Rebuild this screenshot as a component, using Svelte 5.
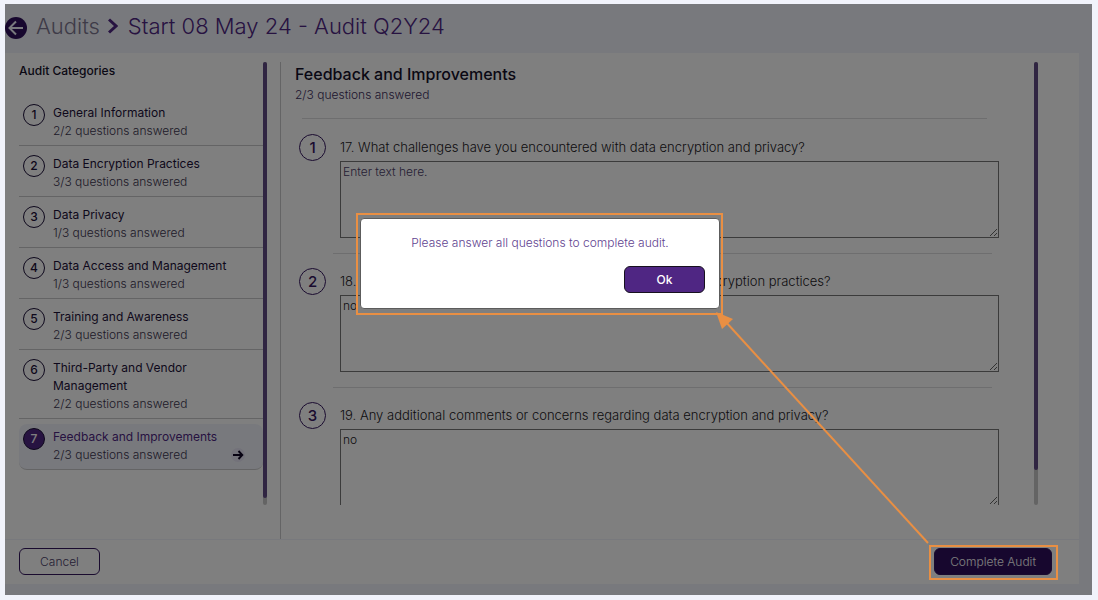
<script>
  let showDialog = $state(true);
  let active = $state(7);

  const categories = [
    { id: 1, name: 'General Information', done: '2/2' },
    { id: 2, name: 'Data Encryption Practices', done: '3/3' },
    { id: 3, name: 'Data Privacy', done: '1/3' },
    { id: 4, name: 'Data Access and Management', done: '1/3' },
    { id: 5, name: 'Training and Awareness', done: '2/3' },
    { id: 6, name: 'Third-Party and Vendor Management', done: '2/2' },
    { id: 7, name: 'Feedback and Improvements', done: '2/3' }
  ];

  let questions = $state([
    { id: 1, text: '17. What challenges have you encountered with data encryption and privacy?', answer: '' },
    { id: 2, text: '18. What improvements would you recommend for our data encryption practices?', answer: 'no' },
    { id: 3, text: '19. Any additional comments or concerns regarding data encryption and privacy?', answer: 'no' }
  ]);
</script>

<div class="app">
  <header class="header">
    <button class="back" aria-label="Back">
      <svg width="22" height="22" viewBox="0 0 22 22">
        <circle cx="11" cy="11" r="11" fill="#2e0f5c" />
        <path d="M18 11H5M11 4.5L4.5 11l6.5 6.5" fill="none" stroke="#f1f3fb" stroke-width="2" />
      </svg>
    </button>
    <a class="crumb" href="#audits">Audits</a>
    <svg class="chevron" width="10" height="16" viewBox="0 0 10 16">
      <path d="M1 1.5L8 8l-7 6.5" fill="none" stroke="#4f2683" stroke-width="3" />
    </svg>
    <h1>Start 08 May 24 - Audit Q2Y24</h1>
  </header>

  <div class="panel">
    <div class="body">
      <aside class="sidebar">
        <div class="scroll">
          <h2 class="side-title">Audit Categories</h2>
          <ul class="categories">
            {#each categories as cat (cat.id)}
              <li>
                <button class="category" class:active={active === cat.id} onclick={() => (active = cat.id)}>
                  <span class="num">{cat.id}</span>
                  <span class="info">
                    <span class="name">{cat.name}</span>
                    <span class="count">{cat.done} questions answered</span>
                  </span>
                  {#if active === cat.id}
                    <svg class="go" width="14" height="14" viewBox="0 0 14 14">
                      <circle cx="7" cy="7" r="7" fill="#e6e4f4" />
                      <path d="M2 7h9M7.5 3L11.3 7l-3.8 4" fill="none" stroke="#0e0524" stroke-width="1.9" />
                    </svg>
                  {/if}
                </button>
              </li>
            {/each}
          </ul>
        </div>
        <div class="track"><div class="thumb"></div></div>
      </aside>

      <main class="main">
        <div class="scroll">
          <h2 class="main-title">Feedback and Improvements</h2>
          <p class="main-count">2/3 questions answered</p>
          <hr />
          {#each questions as q (q.id)}
            <section class="question">
              <span class="q-num">{q.id}</span>
              <div class="q-body">
                <label for="answer-{q.id}">{q.text}</label>
                <textarea id="answer-{q.id}" placeholder="Enter text here." bind:value={q.answer}></textarea>
              </div>
            </section>
          {/each}
        </div>
        <div class="track"><div class="thumb long"></div></div>
      </main>
    </div>

    <footer class="footer">
      <button class="btn">Cancel</button>
      <button class="btn complete" onclick={() => (showDialog = true)}>Complete Audit</button>
    </footer>
  </div>

  {#if showDialog}
    <div class="overlay">
      <div class="dialog" role="alertdialog" aria-labelledby="dialog-text">
        <p id="dialog-text">Please answer all questions to complete audit.</p>
        <button class="btn ok" onclick={() => (showDialog = false)}>Ok</button>
      </div>
    </div>

    <svg class="callout" width="1087" height="591" viewBox="0 0 1087 591">
      <g fill="none" stroke="#e98f43" stroke-width="2">
        <rect x="352" y="210" width="365" height="100" />
        <rect x="925" y="542" width="127" height="33" />
        <path d="M923 539L720 317" />
      </g>
      <path d="M711 308l17 7-11 10z" fill="#e98f43" />
    </svg>
  {/if}
</div>

<style>
  :global(body) {
    background: #f1f3fb;
    font-family: Inter, 'Liberation Sans', sans-serif;
    font-weight: 300;
  }

  .app, .app * {
    box-sizing: border-box;
  }

  .app {
    position: relative;
    display: flex;
    flex-direction: column;
    height: calc(100vh - 9px);
    margin: 4px 6px 5px 5px;
    padding: 0 13px 11px 0;
    background: #f1f3fb;
  }

  h1, h2, p, ul {
    margin: 0;
    padding: 0;
  }

  button {
    font: inherit;
    cursor: pointer;
  }

  .header {
    display: flex;
    align-items: center;
    height: 49px;
    flex: none;
    padding-bottom: 5px;
    font-size: 22px;
    line-height: 28px;
  }

  .back {
    display: flex;
    margin: 3px 9px 0 0;
    padding: 0;
    border: 0;
    background: none;
  }

  .crumb {
    color: #7d7790;
    text-decoration: none;
  }

  .chevron {
    margin: 0 10px 0 8px;
  }

  h1 {
    font-size: 22px;
    font-weight: 300;
    color: #4f2683;
  }

  .panel {
    display: flex;
    flex-direction: column;
    flex: 1;
    min-height: 0;
    background: #fff;
  }

  .body {
    display: flex;
    flex: 1;
    min-height: 0;
    padding-top: 9px;
  }

  .sidebar {
    display: flex;
    flex: none;
    width: 276px;
    padding: 0 13px 34px 14px;
    border-right: 1px solid #c9c9cb;
  }

  .scroll {
    flex: 1;
    min-width: 0;
    overflow: hidden;
  }

  .track {
    flex: none;
    width: 4px;
    border-radius: 2px;
    background: #c8c8c8;
  }

  .thumb {
    height: 436px;
    border-radius: 2px;
    background: #614a84;
  }

  .thumb.long {
    height: 408px;
  }

  .side-title {
    margin-bottom: 15px;
    font-size: 12px;
    line-height: 18px;
    font-weight: 500;
    color: #15102a;
  }

  .categories {
    list-style: none;
  }

  .category {
    display: flex;
    width: 100%;
    margin-top: 5px;
    padding: 4px;
    padding-bottom: 6px;
    border: 0;
    border-bottom: 1px solid #c9c9cb;
    background: none;
    text-align: left;
    font-size: 12px;
    color: #3c3650;
  }

  .category.active {
    border-radius: 8px;
    background: #f1f3fb;
  }

  li {
    display: flow-root;
  }

  .num {
    flex: none;
    width: 22px;
    height: 22px;
    margin-right: 8px;
    border: 1px solid #1c1038;
    border-radius: 50%;
    font-weight: 500;
    line-height: 20px;
    text-align: center;
    color: #1c1038;
  }

  .active .num {
    background: #4f2683;
    color: #fff;
  }

  .info {
    flex: 1;
  }

  .name, .count {
    display: block;
  }

  .name {
    font-weight: 400;
    line-height: 18px;
    color: #1c1038;
  }

  .active .name {
    color: #4f2683;
  }

  .count {
    line-height: 17px;
  }

  .go {
    align-self: flex-end;
    margin: 0 14px 1px 0;
  }

  .main {
    display: flex;
    flex: 1;
    min-width: 0;
    padding: 0 41px 34px 14px;
  }

  .main-title {
    font-size: 16px;
    line-height: 24px;
    font-weight: 500;
    color: #15102a;
  }

  .main-count {
    font-size: 12px;
    line-height: 18px;
    color: #3c2e5c;
  }

  hr {
    margin: 14px 47px 1px 7px;
    border: 0;
    border-top: 1px solid #dcdcdf;
  }

  .question {
    display: flex;
    padding: 14px 35px 0 4px;
  }

  .q-num {
    flex: none;
    width: 27px;
    height: 27px;
    margin-right: 7px;
    border: 1px solid #34165f;
    border-radius: 50%;
    font-size: 15px;
    line-height: 25px;
    font-weight: 500;
    text-align: center;
    color: #34165f;
  }

  .q-body {
    flex: 1;
    padding-bottom: 15px;
    border-bottom: 1px solid #dcdcdf;
    margin-right: 7px;
  }

  label {
    display: block;
    margin: 0 0 1px 7px;
    font-size: 13px;
    line-height: 26px;
    color: #1b1823;
  }

  textarea {
    display: block;
    width: 100%;
    height: 77px;
    position: relative;
    left: 7px;
    padding: 1px 2px;
    border: 1px solid #767676;
    border-radius: 0;
    background: #fff;
    font: inherit;
    font-size: 12px;
    line-height: 18px;
    color: #1b1823;
  }

  textarea::placeholder {
    color: #4b3d68;
    opacity: 1;
  }

  .footer {
    display: flex;
    flex: none;
    align-items: center;
    justify-content: space-between;
    height: 45px;
    padding: 0 27px 1px 14px;
    border-top: 1px solid #f1f3fb;
  }

  .btn {
    height: 27px;
    padding: 0 15px;
    min-width: 81px;
    border: 1px solid #34165f;
    border-radius: 6px;
    background: #fff;
    font-size: 12px;
    color: #4b3d68;
  }

  .complete {
    background: #2e0f5c;
    color: #fff;
  }

  .overlay {
    position: absolute;
    inset: 0;
    display: flex;
    align-items: flex-start;
    justify-content: center;
    padding: 214px 17px 0 0;
    background: rgba(0, 0, 0, 0.5);
  }

  .dialog {
    display: flex;
    flex-direction: column;
    width: 360px;
    height: 91px;
    padding: 15px 14px;
    border: 1px solid #5c5c5c;
    border-radius: 4px;
    background: #fff;
    font-size: 12px;
    line-height: 18px;
    text-align: center;
    color: #5f4390;
  }

  .ok {
    align-self: flex-end;
    margin-top: 14px;
    flex: none;
    border-color: #17111f;
    background: #4f2683;
    color: #fff;
    font-weight: 500;
  }

  .callout {
    position: absolute;
    top: 0;
    left: 0;
    pointer-events: none;
  }
</style>
